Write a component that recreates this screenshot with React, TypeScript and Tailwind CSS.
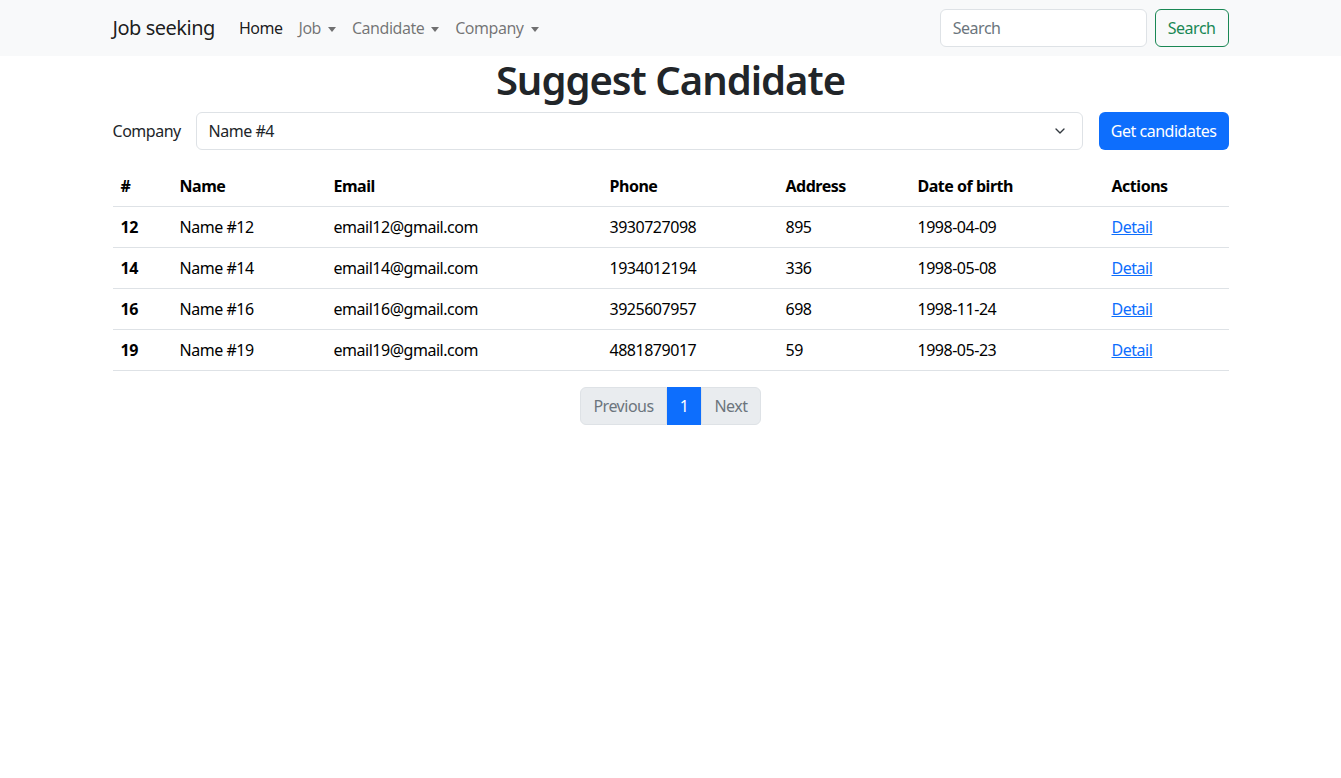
import { ChevronDown } from "lucide-react";

const ROWS = [
  { id: 12, name: "Name #12", email: "email12@gmail.com", phone: "3930727098", address: "895", dob: "1998-04-09" },
  { id: 14, name: "Name #14", email: "email14@gmail.com", phone: "1934012194", address: "336", dob: "1998-05-08" },
  { id: 16, name: "Name #16", email: "email16@gmail.com", phone: "3925607957", address: "698", dob: "1998-11-24" },
  { id: 19, name: "Name #19", email: "email19@gmail.com", phone: "4881879017", address: "59", dob: "1998-05-23" },
];

function Caret() {
  return (
    <span className="ml-[7px] inline-block align-middle border-x-[4.5px] border-t-[5px] border-x-transparent border-t-current" />
  );
}

function Navbar() {
  return (
    <nav className="h-14 bg-[#f8f9fa]">
      <div className="mx-auto flex h-full w-[1140px] items-center px-3">
        <a className="mr-4 text-[20px] text-black/90">Job seeking</a>
        <ul className="flex items-center text-base">
          <li className="px-2 text-black/90">Home</li>
          <li className="px-2 text-black/55">
            Job
            <Caret />
          </li>
          <li className="px-2 text-black/55">
            Candidate
            <Caret />
          </li>
          <li className="px-2 text-black/55">
            Company
            <Caret />
          </li>
        </ul>
        <form className="ml-auto flex items-center gap-2">
          <input
            placeholder="Search"
            className="h-[38px] w-[207px] rounded-md border border-[#dee2e6] bg-white px-3 text-base tracking-[-0.03em] placeholder:text-[#6c757d] outline-none"
          />
          <button className="h-[38px] rounded-md border border-[#198754] px-3 text-base tracking-[-0.03em] text-[#198754]">
            Search
          </button>
        </form>
      </div>
    </nav>
  );
}

export default function App() {
  return (
    <div
      className="min-h-[778px] bg-white tracking-[-0.03em] text-[#212529]"
      style={{ fontFamily: '"Noto Sans", sans-serif' }}
    >
      <Navbar />
      <main className="mx-auto w-[1140px] px-3">
        <h1 className="mb-2 text-center text-[40px] font-semibold leading-[1.2] tracking-[-0.025em]">
          Suggest Candidate
        </h1>

        <div className="flex items-center">
          <label className="w-[83px] text-base">Company</label>
          <div className="relative flex h-[38px] flex-1 items-center rounded-md border border-[#dee2e6] px-3 text-base">
            Name #4
            <ChevronDown className="absolute right-[14px] h-4 w-4 text-[#343a40]" strokeWidth={2} />
          </div>
          <button className="ml-4 h-[38px] rounded-md bg-[#0d6efd] px-3 text-base tracking-[-0.03em] text-white">
            Get candidates
          </button>
        </div>

        <table className="mt-4 w-full table-fixed border-collapse text-base">
          <colgroup>
            <col className="w-[59px]" />
            <col className="w-[154px]" />
            <col className="w-[276px]" />
            <col className="w-[176px]" />
            <col className="w-[132px]" />
            <col className="w-[194px]" />
            <col />
          </colgroup>
          <thead>
            <tr className="border-b border-[#dee2e6] text-left text-black">
              <th className="p-2 font-bold">#</th>
              <th className="p-2 font-bold">Name</th>
              <th className="p-2 font-bold">Email</th>
              <th className="p-2 font-bold">Phone</th>
              <th className="p-2 font-bold">Address</th>
              <th className="p-2 font-bold">Date of birth</th>
              <th className="p-2 font-bold">Actions</th>
            </tr>
          </thead>
          <tbody>
            {ROWS.map((r) => (
              <tr key={r.id} className="border-b border-[#dee2e6] text-black">
                <th className="p-2 text-left font-bold">{r.id}</th>
                <td className="p-2">{r.name}</td>
                <td className="p-2">{r.email}</td>
                <td className="p-2">{r.phone}</td>
                <td className="p-2">{r.address}</td>
                <td className="p-2">{r.dob}</td>
                <td className="p-2">
                  <a className="text-[#0d6efd] underline">Detail</a>
                </td>
              </tr>
            ))}
          </tbody>
        </table>

        <div className="mt-4 flex justify-center">
          <ul className="flex text-base">
            <li className="rounded-l-md border border-[#dee2e6] bg-[#e9ecef] px-3 py-1.5 text-[#6c757d]">Previous</li>
            <li className="border border-[#0d6efd] bg-[#0d6efd] px-3 py-1.5 text-white">1</li>
            <li className="rounded-r-md border border-[#dee2e6] bg-[#e9ecef] px-3 py-1.5 text-[#6c757d]">Next</li>
          </ul>
        </div>
      </main>
    </div>
  );
}
